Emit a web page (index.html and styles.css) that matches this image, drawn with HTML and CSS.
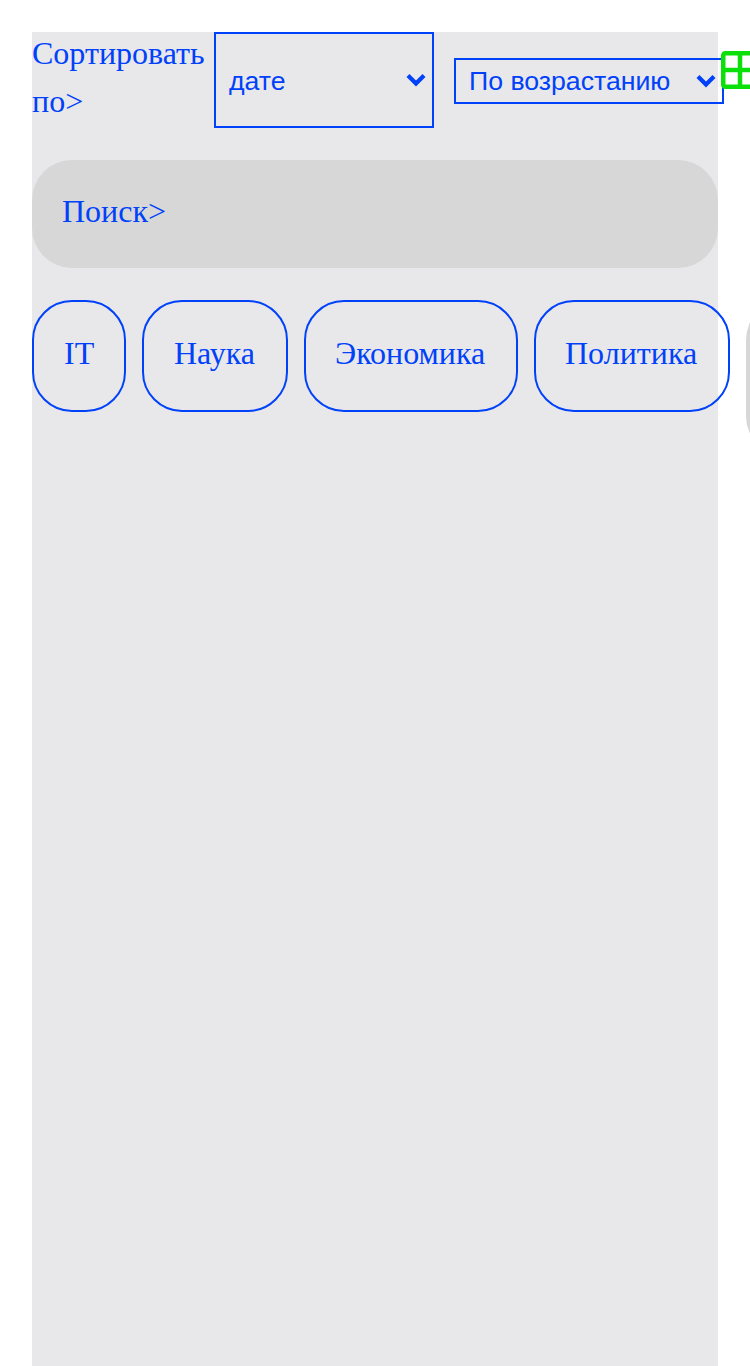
FILE: index.html
```html
<!DOCTYPE html>
<html lang="ru">
<head>
<meta charset="utf-8">
<title>Новости</title>
<link rel="stylesheet" href="styles.css">
</head>
<body>
<main class="page">
  <div class="sort">
    <span class="sort-label">Сортировать по&gt;</span>
    <div class="select select-field">
      <span>дате</span>
      <svg class="chevron" viewBox="0 0 20 14"><path d="M2 2.5 10 10.5 18 2.5"/></svg>
    </div>
    <div class="select select-order">
      <span>По возрастанию</span>
      <svg class="chevron" viewBox="0 0 20 14"><path d="M2 2.5 10 10.5 18 2.5"/></svg>
    </div>
    <svg class="grid-icon" viewBox="0 0 38 38"><rect x="2.25" y="2.25" width="33.5" height="33.5" rx="2"/><path d="M19 2v34M2 19h34"/></svg>
  </div>
  <div class="search">Поиск&gt;</div>
  <div class="tags">
    <div class="tag tag-it">IT</div>
    <div class="tag tag-science">Наука</div>
    <div class="tag tag-economy">Экономика</div>
    <div class="tag tag-politics">Политика</div>
    <div class="tag-more"></div>
  </div>
</main>
</body>
</html>
```
FILE: styles.css
```css
* {
  box-sizing: border-box;
}

html,
body {
  margin: 0;
  height: 100%;
  overflow: hidden;
}

body {
  padding: 32px 32px 0;
  background: #fff;
  color: #0041fa;
  font: 32px/48px "Liberation Serif", serif;
}

.page {
  height: 1334px;
  background: #e8e8ea;
}

.sort {
  display: flex;
  align-items: center;
  height: 96px;
}

.sort-label {
  flex: 0 0 172px;
  align-self: flex-start;
  min-width: 0;
  margin-top: -3px;
}

.select {
  display: flex;
  flex: none;
  align-items: center;
  justify-content: space-between;
  padding: 0 6px 0 13px;
  border: 2px solid #0041fa;
  font: 26.667px/30px "Liberation Sans", sans-serif;
  white-space: nowrap;
}

.select-field {
  width: 220px;
  height: 96px;
  margin-left: 10px;
}

.select-field span {
  padding-top: 2px;
}

.select-order {
  width: 270px;
  height: 46px;
  margin: 2px 0 0 20px;
}

.chevron {
  width: 20px;
  height: 14px;
  fill: none;
  stroke: #0041fa;
  stroke-width: 4.2;
}

.grid-icon {
  position: relative;
  flex: none;
  width: 38px;
  height: 38px;
  margin: -20px 0 0 -3px;
  fill: none;
  stroke: #0be00b;
  stroke-width: 4.5;
}

.search {
  height: 108px;
  margin-top: 32px;
  padding: 27px 30px;
  border-radius: 40px;
  background: #d7d7d7;
}

.tags {
  display: flex;
  align-items: flex-start;
  gap: 16px;
  margin-top: 32px;
}

.tag {
  flex: none;
  height: 112px;
  padding: 27px 0 30px 30px;
  border: 2px solid #0041fa;
  border-radius: 40px;
}

.tag-it {
  width: 94px;
}

.tag-science {
  width: 146px;
}

.tag-economy {
  width: 214px;
  padding-left: 29px;
}

.tag-politics {
  width: 196px;
  padding-left: 29px;
}

.tag-more {
  flex: none;
  width: 180px;
  height: 156px;
  border-radius: 40px;
  background: #d7d7d7;
}
```
